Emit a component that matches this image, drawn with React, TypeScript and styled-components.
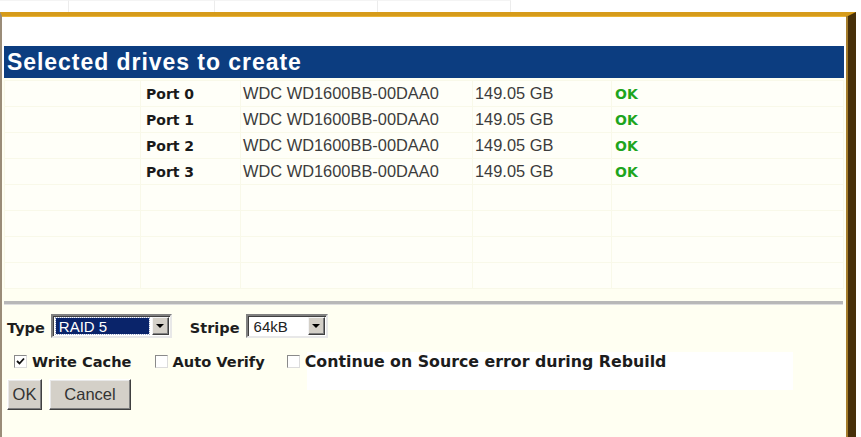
import React from "react";
import styled, { createGlobalStyle } from "styled-components";

const Global = createGlobalStyle`
  html, body { margin: 0; padding: 0; background: #ffffff; }
  body { width: 861px; height: 437px; overflow: hidden; font-family: "Liberation Sans", Arial, sans-serif; }
`;

const Page = styled.div`
  width: 861px;
  height: 437px;
  display: flex;
  flex-direction: column;
  align-items: flex-start;
  background: #ffffff;
`;

const TabStrip = styled.div`
  height: 12px;
  display: flex;
  flex-shrink: 0;
`;

const Tab = styled.div<{ $w: number }>`
  width: ${(p) => p.$w}px;
  border-right: 1px solid #ececec;
  border-top: 1px solid #f4f4f4;
  box-sizing: border-box;
`;

const Frame = styled.div`
  display: flex;
  width: 856px;
  flex: 1;
  min-height: 0;
  border-top: 4px solid #d69b1a;
  border-right: 8px solid #47300a;
  border-left: 2px solid #9a8c78;
  box-sizing: border-box;
  overflow: hidden;
`;

const Inner = styled.div`
  flex: 1;
  min-width: 0;
  display: flex;
  flex-direction: column;
  background: #ffffff;
  box-shadow: inset -2px 0 0 #a57d2c, inset 0 1px 0 #e9b437;
`;

const TopSpace = styled.div`
  height: 30px;
`;

const Header = styled.div`
  height: 32px;
  margin: 0 4px 0 2px;
  background: #0c3d80;
  color: #ffffff;
  font-family: "Liberation Sans", Arial, sans-serif;
  font-weight: bold;
  font-size: 23px;
  letter-spacing: 0.95px;
  line-height: 33px;
  padding-left: 3px;
  white-space: nowrap;
`;

const Content = styled.div`
  flex: 1;
  background: #fffff2;
  margin-right: 2px;
  padding: 2px 2px 0 2px;
  display: flex;
  flex-direction: column;
`;

const DriveTable = styled.table`
  width: 839px;
  border-collapse: collapse;
  table-layout: fixed;
`;

const Cell = styled.td<{ $kind?: "port" | "model" | "size" | "ok" }>`
  height: 26px;
  padding: 0 0 0 ${(p) => (p.$kind === "port" ? 5 : p.$kind === "ok" ? 3 : 2)}px;
  box-sizing: border-box;
  border: 1px solid #f9f9e9;
  background: #fffff8;
  vertical-align: middle;
  white-space: nowrap;
  font-family: ${(p) =>
    p.$kind === "port" || p.$kind === "ok"
      ? '"DejaVu Sans", Verdana, sans-serif'
      : '"Liberation Sans", Arial, sans-serif'};
  font-weight: ${(p) => (p.$kind === "port" || p.$kind === "ok" ? "bold" : "normal")};
  font-size: ${(p) => (p.$kind === "port" || p.$kind === "ok" ? "14px" : "16.4px")};
  color: ${(p) => (p.$kind === "ok" ? "#1ea51e" : p.$kind === "port" ? "#1a1a1a" : "#3c3c3c")};
`;

const Rule = styled.div`
  margin-top: 12px;
  height: 3px;
  width: 839px;
  background: #b8b8b8;
  border-bottom: 1px solid #dedede;
`;

const Form = styled.div`
  padding-left: 3px;
  display: flex;
  flex-direction: column;
`;

const SelectRow = styled.div`
  margin-top: 9px;
  height: 24px;
  display: flex;
  align-items: center;
`;

const Label = styled.span<{ $gapLeft?: number }>`
  font-family: "DejaVu Sans", Verdana, sans-serif;
  font-weight: bold;
  font-size: 14.5px;
  color: #1e1e1e;
  margin-left: ${(p) => p.$gapLeft ?? 0}px;
  margin-right: 6px;
  padding-top: 4px;
`;

const SelectBox = styled.div<{ $w: number }>`
  width: ${(p) => p.$w}px;
  height: 24px;
  box-sizing: border-box;
  display: flex;
  background: #ffffff;
  border: 2px solid;
  border-color: #808080 #e8e8e8 #e8e8e8 #808080;
  box-shadow: inset 1px 1px 0 #404040;
  padding: 1px;
`;

const SelectValue = styled.div<{ $selected?: boolean }>`
  flex: 1;
  display: flex;
  align-items: center;
  padding-left: 3px;
  margin: 1px 3px 1px 2px;
  font-family: "Liberation Sans", Arial, sans-serif;
  font-size: 15px;
  color: ${(p) => (p.$selected ? "#ffffff" : "#222222")};
  background: ${(p) => (p.$selected ? "#0a246a" : "transparent")};
  outline: ${(p) => (p.$selected ? "1px dotted #9aa6c8" : "none")};
`;

const ArrowButton = styled.div`
  width: 17px;
  box-sizing: border-box;
  background: #d4d0c8;
  border: 1px solid;
  border-color: #f4f4f4 #404040 #404040 #f4f4f4;
  box-shadow: inset -1px -1px 0 #808080;
  display: flex;
  align-items: center;
  justify-content: center;
`;

const Arrow = styled.div`
  width: 0;
  height: 0;
  border-left: 4px solid transparent;
  border-right: 4px solid transparent;
  border-top: 4px solid #000000;
`;

const CheckRow = styled.div`
  margin-top: 13px;
  height: 20px;
  display: flex;
  align-items: center;
  padding-left: 7px;
`;

const CheckItem = styled.label<{ $gapLeft?: number; $boxed?: boolean }>`
  position: relative;
  display: flex;
  align-items: center;
  margin-left: ${(p) => p.$gapLeft ?? 0}px;

  &::before {
    content: "";
    display: ${(p) => (p.$boxed ? "block" : "none")};
    position: absolute;
    left: 20px;
    top: 0px;
    width: 486px;
    height: 38px;
    background: #ffffff;
  }
`;

const Box = styled.span`
  position: relative;
  width: 13px;
  height: 13px;
  box-sizing: border-box;
  background: #ffffff;
  border: 1px solid;
  border-color: #8a8a8a #dcdcdc #dcdcdc #8a8a8a;
  display: flex;
  align-items: center;
  justify-content: center;
  margin-right: 5px;
`;

const CheckText = styled.span<{ $size?: number }>`
  position: relative;
  font-family: "DejaVu Sans", Verdana, sans-serif;
  font-weight: bold;
  font-size: ${(p) => p.$size ?? 14.6}px;
  color: #1c1c1c;
  white-space: nowrap;
`;

const ButtonRow = styled.div`
  position: relative;
  margin-top: 8px;
  display: flex;
  gap: 7px;
`;

const Button = styled.button<{ $w: number }>`
  width: ${(p) => p.$w}px;
  height: 31px;
  box-sizing: border-box;
  padding: 0;
  background: #d4d0c8;
  border: 1px solid;
  border-color: #ffffff #404040 #404040 #ffffff;
  box-shadow: inset -1px -1px 0 #808080, inset 1px 1px 0 #e8e8e8;
  font-family: "Liberation Sans", Arial, sans-serif;
  font-size: 16.5px;
  color: #333333;
`;

const drives = [0, 1, 2, 3].map((n) => ({
  port: `Port ${n}`,
  model: "WDC WD1600BB-00DAA0",
  size: "149.05 GB",
  status: "OK",
}));

const colWidths = [136, 100, 232, 139, 232];

export default function App() {
  const emptyRows = 8 - drives.length;
  return (
    <>
      <Global />
      <Page>
        <TabStrip>
          <Tab $w={69} />
          <Tab $w={146} />
          <Tab $w={163} />
          <Tab $w={133} />
        </TabStrip>
        <Frame>
          <Inner>
            <TopSpace />
            <Header>Selected drives to create</Header>
            <Content>
              <DriveTable>
                <colgroup>
                  {colWidths.map((w, i) => (
                    <col key={i} style={{ width: w }} />
                  ))}
                </colgroup>
                <tbody>
                  {drives.map((d) => (
                    <tr key={d.port}>
                      <Cell />
                      <Cell $kind="port">{d.port}</Cell>
                      <Cell $kind="model">{d.model}</Cell>
                      <Cell $kind="size">{d.size}</Cell>
                      <Cell $kind="ok">{d.status}</Cell>
                    </tr>
                  ))}
                  {Array.from({ length: emptyRows }).map((_, r) => (
                    <tr key={`e${r}`}>
                      {colWidths.map((_, c) => (
                        <Cell key={c} />
                      ))}
                    </tr>
                  ))}
                </tbody>
              </DriveTable>
              <Rule />
              <Form>
                <SelectRow>
                  <Label>Type</Label>
                  <SelectBox $w={121}>
                    <SelectValue $selected>RAID 5</SelectValue>
                    <ArrowButton>
                      <Arrow />
                    </ArrowButton>
                  </SelectBox>
                  <Label $gapLeft={18}>Stripe</Label>
                  <SelectBox $w={82}>
                    <SelectValue>64kB</SelectValue>
                    <ArrowButton>
                      <Arrow />
                    </ArrowButton>
                  </SelectBox>
                </SelectRow>
                <CheckRow>
                  <CheckItem>
                    <Box>
                      <svg width="9" height="9" viewBox="0 0 9 9">
                        <path d="M1 4 L3.5 6.5 L8 1.5" stroke="#111" strokeWidth="1.8" fill="none" />
                      </svg>
                    </Box>
                    <CheckText>Write Cache</CheckText>
                  </CheckItem>
                  <CheckItem $gapLeft={23}>
                    <Box />
                    <CheckText>Auto Verify</CheckText>
                  </CheckItem>
                  <CheckItem $gapLeft={22} $boxed>
                    <Box />
                    <CheckText $size={15.8}>Continue on Source error during Rebuild</CheckText>
                  </CheckItem>
                </CheckRow>
                <ButtonRow>
                  <Button $w={35}>OK</Button>
                  <Button $w={82}>Cancel</Button>
                </ButtonRow>
              </Form>
            </Content>
          </Inner>
        </Frame>
      </Page>
    </>
  );
}
